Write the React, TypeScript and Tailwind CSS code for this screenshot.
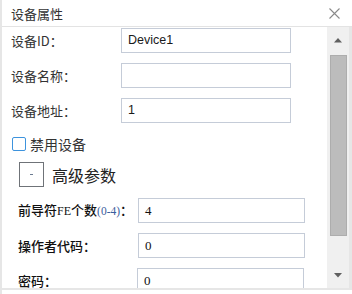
import React from "react";

const cjk = "font-['Noto_Sans_CJK_SC','Noto_Sans',sans-serif]";

function UpperRow({ label, value }: { label: React.ReactNode; value?: string }) {
  return (
    <div className="flex items-center h-[25px] pl-[9px]">
      <div className="w-[110px] whitespace-nowrap text-[13px] text-[#333] leading-none">{label}</div>
      <div className="w-[170px] h-[25px] border border-[#c5ccd8] bg-white flex items-center pl-[6px] text-[12.5px] text-[#1a1a1a] font-['Liberation_Sans',Arial,sans-serif]">
        {value}
      </div>
    </div>
  );
}

function LowerRow({ label, value, third = false }: { label: React.ReactNode; value: string; third?: boolean }) {
  return (
    <div className="flex items-center h-[25px] pl-[16px]">
      <div className={(third ? "w-[119px]" : "w-[120px]") + " whitespace-nowrap text-[13px] text-[#111] font-medium leading-none"}>{label}</div>
      <div className="w-[167px] h-[25px] shrink-0 border border-[#c5ccd8] bg-white flex items-center pl-[6px] text-[13px] text-[#111] font-['Liberation_Serif',serif]">
        {value}
      </div>
    </div>
  );
}

export default function App() {
  return (
    <div className={`w-[352px] h-[294px] bg-white flex flex-col border-l-2 border-[#e6e6e6] ${cjk}`}>
      <div className="h-[27px] shrink-0 flex items-center justify-between pl-[9px] pr-[12px] border-b border-[#e3e3e3]">
        <span className="text-[13px] text-[#333] leading-none">设备属性</span>
        <svg width="11" height="11" viewBox="0 0 11 11">
          <path d="M0.5 0.5 L10.5 10.5 M10.5 0.5 L0.5 10.5" stroke="#8a8a8a" strokeWidth="1.1" fill="none" />
        </svg>
      </div>
      <div className="flex h-[263px] shrink-0 border-b-2 border-r-[3px] border-[#e6e6e6]">
        <div className="flex-1 overflow-hidden flex flex-col pt-[1px]">
          <div className="flex flex-col gap-[10px]">
            <UpperRow label={<span>设备ID：</span>} value="Device1" />
            <UpperRow label="设备名称：" />
            <UpperRow label="设备地址：" value="1" />
          </div>
          <div className="flex items-center h-[14px] mt-[14px] pl-[10px] gap-[4px]">
            <div className="w-[14px] h-[14px] border-[1.5px] border-[#3d93dd] rounded-[2px] bg-white" />
            <span className="text-[14px] text-[#333] leading-none">禁用设备</span>
          </div>
          <div className="flex items-center h-[25px] mt-[11px] pl-[17px] gap-[8px]">
            <div className="w-[25px] h-[25px] border border-[#6f7378] flex items-center justify-center">
              <div className="w-[3px] h-[1px] bg-[#6a7a90]" />
            </div>
            <span className="text-[16px] text-[#222] leading-none">高级参数</span>
          </div>
          <div className="flex flex-col gap-[10px] mt-[11px]">
            <LowerRow
              label={
                <span>
                  前导符<span className="font-['Liberation_Serif',serif] text-[12px]">FE</span>个数<span className="font-['Liberation_Serif',serif] font-normal text-[11.5px] text-[#3a5d9c]">(0-4)</span>：
                </span>
              }
              value="4"
            />
            <LowerRow label="操作者代码：" value="0" />
            <LowerRow label="密码：" value="0" third />
          </div>
        </div>
        <div className="w-[22px] shrink-0 bg-[#f0f0f0] flex flex-col items-center">
          <div className="h-[26px] flex items-center justify-center">
            <svg width="8" height="5" viewBox="0 0 8 5">
              <path d="M4 0 L8 4.5 L0 4.5 Z" fill="#606060" />
            </svg>
          </div>
          <div className="w-[17px] h-[181px] mt-[2px] bg-[#bcbcbc] border border-[#adadad]" />
          <div className="flex-1 flex items-end justify-center pb-[10px]">
            <svg width="8" height="5" viewBox="0 0 8 5">
              <path d="M0 0 L8 0 L4 4.5 Z" fill="#606060" />
            </svg>
          </div>
        </div>
      </div>
    </div>
  );
}
